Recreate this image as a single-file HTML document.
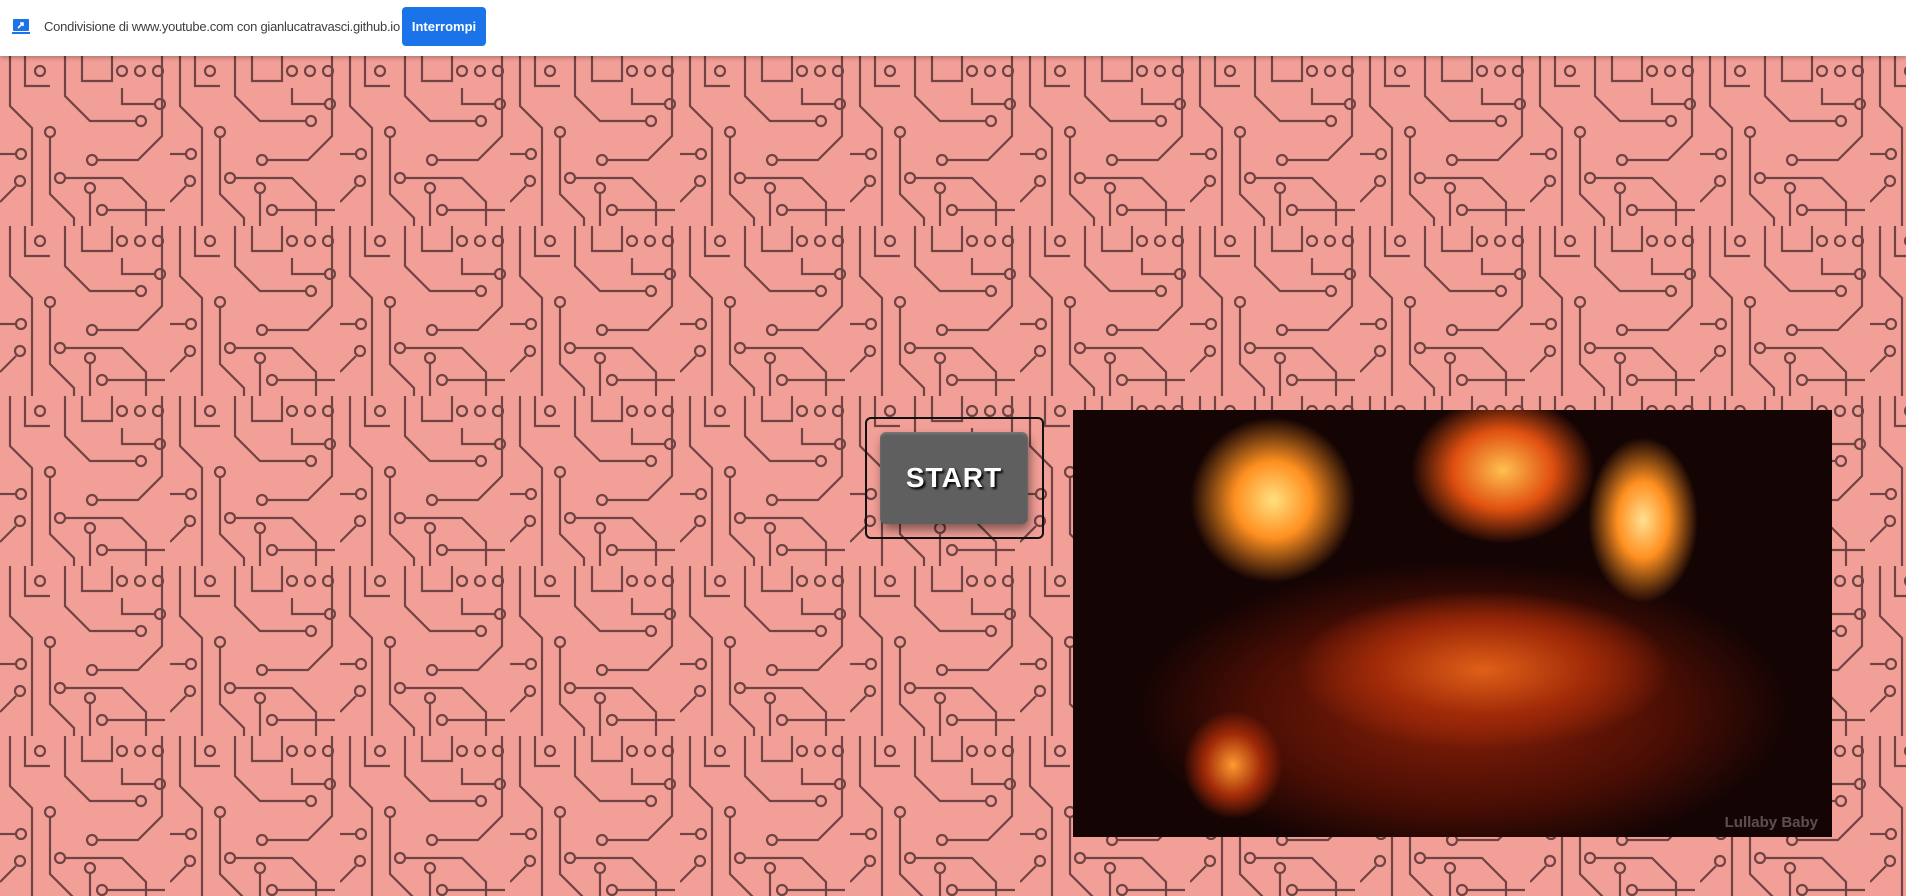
<!DOCTYPE html>
<html><head><meta charset="utf-8"><style>
html,body{margin:0;width:1906px;height:896px;overflow:hidden;background:#f29f97;font-family:"Liberation Sans",sans-serif}
.bar{position:absolute;left:0;top:0;width:1906px;height:56px;background:#fff;box-shadow:0 2px 4px rgba(0,0,0,.25);z-index:5}
.bar .t{position:absolute;left:44px;top:19px;font-size:13px;color:#3c4043;letter-spacing:-0.25px;white-space:nowrap}
.bar .b{position:absolute;left:402px;top:7px;width:84px;height:39px;background:#1a73e8;border-radius:4px;color:#fff;font-weight:bold;font-size:13px;line-height:39px;text-align:center}
.bg{position:absolute;left:0;top:56px}
.outline{position:absolute;left:865px;top:417px;width:175px;height:118px;border:2px solid #111;border-radius:6px}
.btn{position:absolute;left:880px;top:432px;width:148px;height:92px;background:#5f5f5f;border-radius:6px;box-shadow:2px 6px 10px rgba(0,0,0,.45),inset 0 2px 2px rgba(255,255,255,.15);color:#fff;font-weight:bold;font-size:28px;text-align:center;line-height:92px;text-shadow:2px 2px 2px #000;letter-spacing:1px}
.vid{position:absolute;left:1073px;top:410px;width:759px;height:427px;background:#140404;overflow:hidden}
.vid div{position:absolute;border-radius:50%}
</style></head><body>
<div class="bar">
<svg style="position:absolute;left:12px;top:18px" width="18" height="17"><rect x="1" y="1" width="16" height="12" fill="#1a73e8" rx="1"/><rect x="0" y="14" width="18" height="2" fill="#1a73e8"/><path d="M6 10 L11 5 M8 5 H11 V8" stroke="#fff" stroke-width="1.6" fill="none"/></svg>
<div class="t">Condivisione di www.youtube.com con gianlucatravasci.github.io</div>
<div class="b">Interrompi</div>
</div>
<svg class="bg" width="1906" height="840">
<defs><pattern id="p" width="170" height="170" patternUnits="userSpaceOnUse">
<g stroke="#704444" stroke-width="2.2" fill="none">
<path d="M10 0 V50 L32 72 V170"/><path d="M25 0 V30 H50"/><circle cx="40" cy="15" r="5"/>
<path d="M65 0 V40 L90 65 H135"/><circle cx="141" cy="65" r="5"/>
<path d="M82 0 V25 H112 V0"/><circle cx="122" cy="15" r="5"/><circle cx="140" cy="15" r="5"/><circle cx="158" cy="15" r="5"/>
<path d="M162 0 V80 L138 104 H98"/><circle cx="92" cy="104" r="5"/>
<path d="M50 82 V138 L74 162 V170"/><circle cx="50" cy="76" r="5"/>
<path d="M66 122 H122 L146 146 V170"/><circle cx="60" cy="122" r="5"/>
<path d="M0 98 H16"/><circle cx="21" cy="98" r="5"/>
<path d="M90 138 V170"/><circle cx="90" cy="132" r="5"/>
<path d="M108 154 H165"/><circle cx="102" cy="154" r="5"/>
<path d="M0 146 L16 130"/><circle cx="20" cy="125" r="5"/>
<path d="M122 32 V48 H155"/><circle cx="160" cy="48" r="5"/>
</g></pattern></defs>
<rect width="1906" height="840" fill="url(#p)"/>
</svg>
<div class="outline"></div>
<div class="btn">START</div>
<div class="vid">
<div style="left:60px;top:150px;width:660px;height:300px;background:radial-gradient(#8a2008 0%,#4a0e04 45%,transparent 70%)"></div>
<div style="left:220px;top:180px;width:380px;height:160px;background:radial-gradient(#e06018 0%,#a02a08 40%,transparent 70%)"></div>
<div style="left:110px;top:0px;width:180px;height:180px;background:radial-gradient(#ffe080 0%,#ff9020 30%,transparent 65%)"></div>
<div style="left:330px;top:-20px;width:200px;height:160px;background:radial-gradient(#ffc050 0%,#e05010 35%,transparent 65%)"></div>
<div style="left:510px;top:20px;width:120px;height:180px;background:radial-gradient(#ffe090 0%,#ff9020 30%,transparent 65%)"></div>
<div style="left:110px;top:300px;width:100px;height:110px;background:radial-gradient(#ff9a30 0%,#a02a08 40%,transparent 70%)"></div>
<span style="position:absolute;right:14px;bottom:6px;color:rgba(255,255,255,.3);font-weight:bold;font-size:15px">Lullaby Baby</span>
</div>
</body></html>
